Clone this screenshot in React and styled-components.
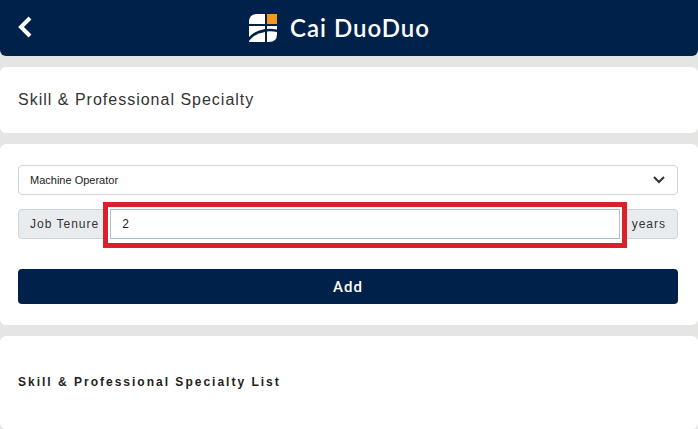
import React, { useState } from 'react';
import styled, { createGlobalStyle } from 'styled-components';

const GlobalStyle = createGlobalStyle`
  * {
    box-sizing: border-box;
  }

  body {
    margin: 0;
    background-color: #e5e5e3;
    color: #333;
    font-family: 'Liberation Sans', Arial, sans-serif;
    font-size: 12px;
  }
`;

// Stacks the header and the cards
const Page = styled.div`
  display: flex;
  flex-direction: column;
  gap: 11px;
  min-height: 100vh;
`;

// Navy bar with the back button and the brand
const Header = styled.header`
  display: grid;
  grid-template-columns: 1fr auto 1fr;
  align-items: center;
  height: 56px;
  padding: 0 38px 0 18px;
  background-color: #00224a;
  border-radius: 0 0 6px 6px;
`;

const BackButton = styled.button`
  display: flex;
  justify-self: start;
  padding: 0;
  border: 0;
  background: none;
  color: #fff;
  cursor: pointer;
`;

const Brand = styled.div`
  display: flex;
  align-items: center;
  gap: 12px;
  color: #fff;
  font-family: Lato, sans-serif;
  font-size: 24px;
  font-weight: 600;
  letter-spacing: 1px;
  line-height: 28px;
`;

// White rounded panel
const Card = styled.section`
  flex: ${(props) => (props.$grow ? '1' : 'none')};
  padding: ${(props) => props.$padding || '21px 20px 21px 18px'};
  background-color: #fff;
  border-radius: 6px;
`;

const PageTitle = styled.h1`
  margin: 0;
  font-size: 16px;
  font-weight: 400;
  letter-spacing: 1px;
  line-height: 24px;
`;

const ListTitle = styled.h2`
  margin: 0;
  color: #222;
  font-size: 12px;
  font-weight: 700;
  letter-spacing: 2px;
  line-height: 20px;
`;

const Form = styled.form`
  display: flex;
  flex-direction: column;
  gap: 14px;
`;

const SelectWrap = styled.div`
  position: relative;
`;

const Select = styled.select`
  display: block;
  width: 100%;
  height: 30px;
  padding: 0 36px 0 11px;
  border: 1px solid #ced4da;
  border-radius: 4px;
  background-color: #fff;
  color: #222;
  font: inherit;
  font-size: 11px;
  appearance: none;
`;

// Arrow drawn over the right end of the select
const SelectArrow = styled.svg`
  position: absolute;
  top: 9px;
  right: 13px;
  pointer-events: none;
`;

// Input with a label on its left and a unit on its right
const InputGroup = styled.div`
  display: flex;
  height: 30px;
`;

const Addon = styled.label`
  display: flex;
  align-items: center;
  padding: ${(props) => (props.$side === 'left' ? '0 10px 0 11px' : '0 11px')};
  border: 1px solid #ced4da;
  border-radius: ${(props) => (props.$side === 'left' ? '4px 0 0 4px' : '0 4px 4px 0')};
  background-color: #e9ecef;
  letter-spacing: 1px;
`;

const Field = styled.div`
  position: relative;
  flex: 1;
`;

const Input = styled.input`
  display: block;
  width: 100%;
  height: 100%;
  padding: 0 11px;
  border: 1px solid #a9bfd3;
  border-radius: 0;
  outline: 0;
  background-color: #fff;
  color: #222;
  font: inherit;
`;

// Red frame around the field that needs attention
const Highlight = styled.div`
  position: absolute;
  inset: -7px -7px -9px;
  border: 5px solid #d9202b;
  box-shadow: inset 0 0 0 2px #fff;
  pointer-events: none;
`;

const AddButton = styled.button`
  height: 35px;
  margin-top: 16px;
  border: 0;
  border-radius: 4px;
  background-color: #00224a;
  color: #fff;
  font-family: Roboto, sans-serif;
  font-size: 15px;
  font-weight: 500;
  letter-spacing: 1px;
  cursor: pointer;
`;

const Logo = () => (
  <svg width="30" height="30" viewBox="0 0 30 30" aria-hidden="true">
    <path d="M9 1H17V11H1V9Q1 1 9 1Z" fill="#fff" />
    <path d="M19 1H29V11H19Z" fill="#f7981d" />
    <path d="M1 13H17V16Q7 17.5 1 24Z" fill="#fff" />
    <path d="M17 19V29H1V28Q6 20.5 17 19Z" fill="#fff" />
    <path d="M19 13H29V16.5Q23 15.5 19 16Z" fill="#fff" />
    <path d="M19 18.5Q24 18 29 19V21Q29 29 21 29H19Z" fill="#fff" />
  </svg>
);

const App = () => {
  const [job, setJob] = useState('Machine Operator');
  const [tenure, setTenure] = useState('2');

  return (
    <Page>
      <GlobalStyle />
      <Header>
        <BackButton type="button" aria-label="Back">
          <svg width="14" height="24" viewBox="0 0 14 24" fill="none" stroke="currentColor" strokeWidth="4">
            <path d="M12 2L3 11L12 20" />
          </svg>
        </BackButton>
        <Brand>
          <Logo />
          Cai DuoDuo
        </Brand>
      </Header>

      <Card>
        <PageTitle>Skill &amp; Professional Specialty</PageTitle>
      </Card>

      <Card>
        <Form onSubmit={(e) => e.preventDefault()}>
          <SelectWrap>
            <Select aria-label="Specialty" value={job} onChange={(e) => setJob(e.target.value)}>
              <option>Machine Operator</option>
            </Select>
            <SelectArrow width="12" height="12" viewBox="0 0 12 12" fill="none" stroke="#333" strokeWidth="2">
              <path d="M1 3L6 8L11 3" />
            </SelectArrow>
          </SelectWrap>
          <InputGroup>
            <Addon htmlFor="tenure" $side="left">Job Tenure</Addon>
            <Field>
              <Input id="tenure" value={tenure} onChange={(e) => setTenure(e.target.value)} />
              <Highlight />
            </Field>
            <Addon as="span" $side="right">years</Addon>
          </InputGroup>
          <AddButton type="submit">Add</AddButton>
        </Form>
      </Card>

      <Card $grow $padding="36px 18px">
        <ListTitle>Skill &amp; Professional Specialty List</ListTitle>
      </Card>
    </Page>
  );
};

export default App;
